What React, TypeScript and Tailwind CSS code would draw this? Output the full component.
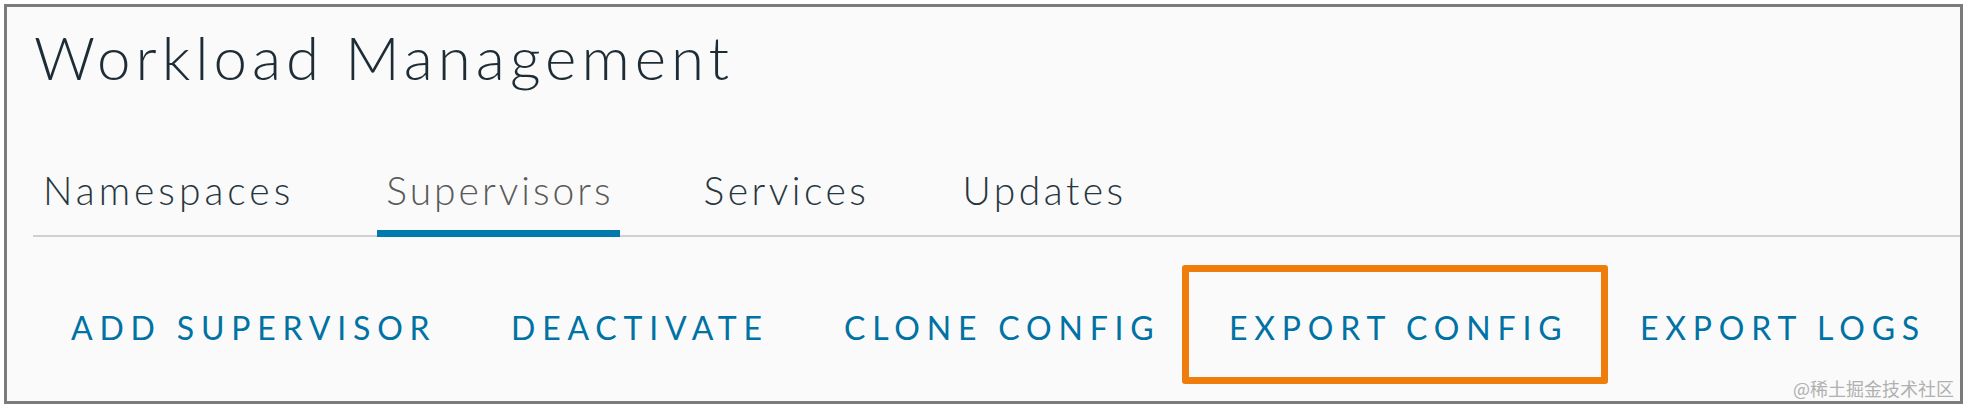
import React from "react";

const tabs = [
  { label: "Namespaces", active: false, cls: "px-[10px] tracking-[4px]" },
  { label: "Supervisors", active: true, cls: "pl-[9px] pr-[7px] tracking-[3px]" },
  { label: "Services", active: false, cls: "px-[10px] tracking-[3.5px]" },
  { label: "Updates", active: false, cls: "px-[10px] tracking-[3.5px]" },
];

const actions = [
  { label: "ADD SUPERVISOR", w: "w-[440px]" },
  { label: "DEACTIVATE", w: "w-[333px]" },
  { label: "CLONE CONFIG", w: "w-[385px]" },
  { label: "EXPORT CONFIG", w: "w-[411px]" },
  { label: "EXPORT LOGS", w: "w-auto" },
];

export default function App() {
  return (
    <div className="w-[1966px] h-[407px] bg-white pt-[4px] pl-[4px]" style={{ fontFamily: "Lato, 'Noto Sans', sans-serif" }}>
      <div className="relative w-[1959px] h-[400px] border-[3px] border-[#7b7b7b] bg-[#fafafa] overflow-hidden">
        {/* Title */}
        <div className="pt-[20px] pl-[27px]">
          <h1 className="text-[60px] leading-none font-light tracking-[5px] text-[#1e2d35]">Workload Management</h1>
        </div>

        {/* Tabs */}
        <nav className="mt-[84px] ml-[26px] flex border-b-[2px] border-[#cdd1d4]">
          <div className="flex gap-[73px] -mb-[2px]">
            {tabs.map((t) => (
              <div
                key={t.label}
                className={
                  "pb-[20px] border-b-[7px] text-[39px] leading-none font-light " +
                  t.cls +
                  " " +
                  (t.active ? "border-[#0079ad] text-[#5a5a5a]" : "border-transparent text-[#27363f]")
                }
              >
                {t.label}
              </div>
            ))}
          </div>
        </nav>

        {/* Actions */}
        <div className="mt-[75px] pl-[64px] flex">
          {actions.map((a) => (
            <div key={a.label} className={"shrink-0 " + a.w}>
              <div className="relative inline-block text-[32px] leading-none font-normal tracking-[6.8px] text-[#0072a3]">
                {a.label}
                {a.label === "EXPORT CONFIG" && (
                  <span className="absolute -top-[47px] -bottom-[40px] -left-[47px] -right-[40px] border-[7px] border-[#ef7d0b] rounded-[3px]" />
                )}
              </div>
            </div>
          ))}
        </div>

        {/* Watermark */}
        <div
          className="absolute right-[6px] bottom-[4px] text-[18px] leading-none text-[#b0b0b0]"
          style={{ fontFamily: "'Noto Sans CJK SC', serif" }}
        >
          @稀土掘金技术社区
        </div>
      </div>
    </div>
  );
}
